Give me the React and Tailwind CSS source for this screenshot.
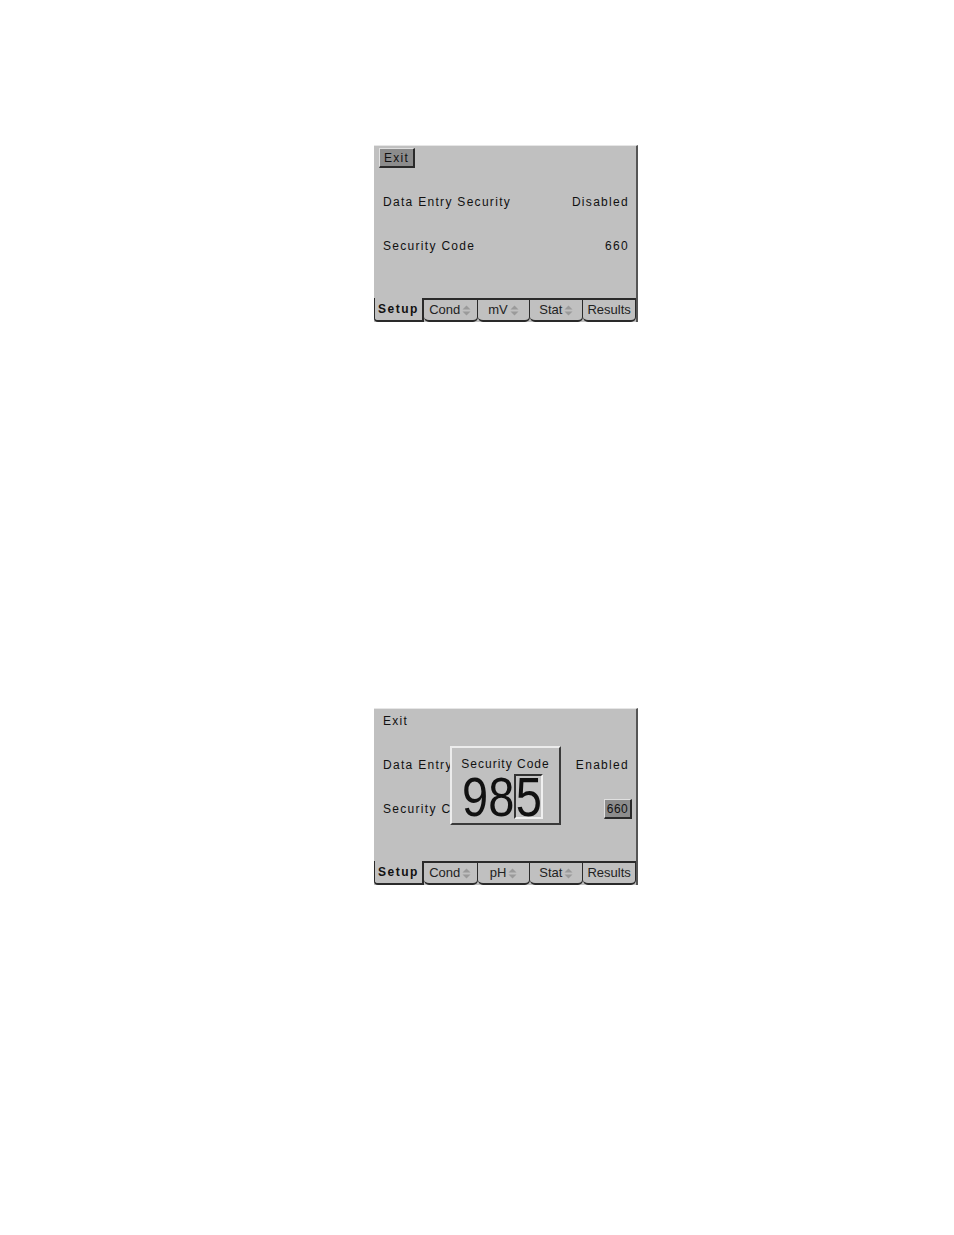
import React from "react";

const LABEL = { fontFamily: '"Liberation Sans", Arial, sans-serif' };

function Arrows() {
  return (
    <svg width="9" height="11" viewBox="0 0 9 11" className="ml-[2px] inline-block">
      <path d="M4.5 0.5 L8.5 4.5 L0.5 4.5 Z" fill="#9a9a9a" />
      <path d="M0.5 6.5 L8.5 6.5 L4.5 10.5 Z" fill="#9a9a9a" />
    </svg>
  );
}

function Tabs({ middle }) {
  const tabs = [
    { label: "Setup", w: "w-[50px]", active: true },
    { label: "Cond", w: "w-[54px]", arrows: true },
    { label: middle, w: "w-[53px]", arrows: true },
    { label: "Stat", w: "w-[53px]", arrows: true },
    { label: "Results", w: "w-[53px]" },
  ];
  return (
    <div className="flex h-[24px] items-stretch">
      {tabs.map((t) =>
        t.active ? (
          <div
            key={t.label}
            className={`${t.w} flex items-center justify-center rounded-bl-[4px] border-b-2 border-l border-r-2 border-[#2a2a2a] bg-[#c0c0c0] text-[12px] font-bold tracking-[1.5px] text-[#111]`}
            style={LABEL}
          >
            {t.label}
          </div>
        ) : (
          <div
            key={t.label}
            className={`${t.w} flex items-center justify-center rounded-b-[5px] border-b-2 border-r border-t-2 border-[#2a2a2a] bg-[#c0c0c0] text-[13px] text-[#222]`}
            style={LABEL}
          >
            <span>{t.label}</span>
            {t.arrows && <Arrows />}
          </div>
        )
      )}
    </div>
  );
}

function Row({ left, right, clip }) {
  return (
    <div className="flex h-[20px] items-center justify-between pl-[9px] pr-[7px] text-[12px] tracking-[1.3px] text-[#111]" style={LABEL}>
      <span className={clip ? `${clip} overflow-hidden whitespace-nowrap` : "whitespace-nowrap"}>{left}</span>
      {right}
    </div>
  );
}

function RaisedButton({ children, extra = "px-[4px] tracking-[1.3px]" }) {
  return (
    <span className={`flex h-[20px] items-center border border-b-2 border-r-2 border-t-[#e0e0e0] border-l-[#e0e0e0] border-b-[#2a2a2a] border-r-[#2a2a2a] bg-[#8c8c8c] text-[12px] text-[#111] ${extra}`} style={LABEL}>
      {children}
    </span>
  );
}

function Digit({ children }) {
  return (
    <span className="inline-block scale-y-[1.2] text-[47px] leading-[40px] text-[#111]" style={LABEL}>
      {children}
    </span>
  );
}

function Screen({ exitButton, status, codeButton, middle, popup }) {
  return (
    <div className="relative flex h-[177px] w-[264px] flex-col border-r-2 border-t border-r-[#555] border-t-[#e6e6e6] bg-[#c0c0c0]">
      <div className="mt-[2px] flex h-[20px] items-center pl-[5px]">
        {exitButton ? (
          <RaisedButton>Exit</RaisedButton>
        ) : (
          <span className="pl-[4px] text-[12px] tracking-[1.3px] text-[#111]" style={LABEL}>Exit</span>
        )}
      </div>
      <div className="mt-[24px]">
        <Row left="Data Entry Security" clip={popup ? "w-[67px]" : ""} right={<span>{status}</span>} />
      </div>
      <div className="mt-[24px]">
        <Row
          left="Security Code"
          clip={popup ? "w-[67px]" : ""}
          right={
            codeButton ? (
              <span className="-mr-[3px]">
                <RaisedButton extra="w-[28px] justify-center tracking-[0.5px]">660</RaisedButton>
              </span>
            ) : (
              <span>660</span>
            )
          }
        />
      </div>
      <div className="mt-auto">
        <Tabs middle={middle} />
      </div>
      {popup && (
        <div className="absolute left-[76px] top-[37px] h-[79px] w-[111px] border-2 border-b-[#3a3a3a] border-l-[#ececec] border-r-[#3a3a3a] border-t-[#ececec] bg-[#c0c0c0]">
          <div className="pt-[10px] text-center text-[12px] leading-[12px] tracking-[1px] text-[#111]" style={LABEL}>
            Security Code
          </div>
          <div className="mt-[4px] flex items-center pl-[10px]">
            <Digit>98</Digit>
            <span className="flex h-[45px] w-[29px] items-center justify-center border-2 border-b-[#f0f0f0] border-l-[#333] border-r-[#f0f0f0] border-t-[#333] bg-[#c4c4c4]">
              <Digit>5</Digit>
            </span>
          </div>
        </div>
      )}
    </div>
  );
}

export default function App() {
  return (
    <div className="min-h-[1235px] w-[954px] bg-white pl-[374px] pt-[145px]">
      <Screen exitButton status="Disabled" middle="mV" />
      <div className="mt-[386px]">
        <Screen status="Enabled" codeButton middle="pH" popup />
      </div>
    </div>
  );
}
